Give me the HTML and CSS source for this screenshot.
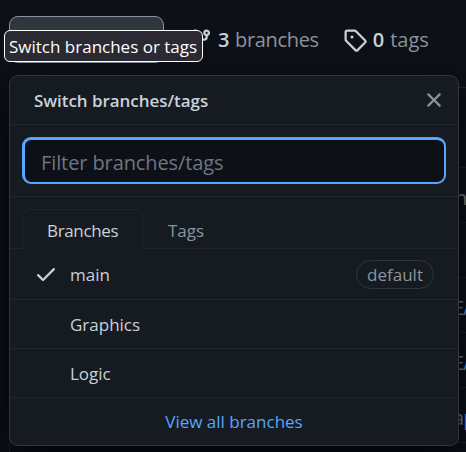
FILE: index.html
```html
<!DOCTYPE html>
<html lang="en">
<head>
<meta charset="utf-8">
<title>Switch branches/tags</title>
<link rel="stylesheet" href="styles.css">
</head>
<body>
<div class="page">
  <div class="toolbar">
    <button class="branch-button" aria-label="Switch branches or tags"></button>
    <a class="stat stat-branches">
      <svg width="24" height="24" viewBox="0 0 16 16"><path fill-rule="evenodd" d="M11.75 2.5a.75.75 0 100 1.5.75.75 0 000-1.5zm-2.25.75a2.25 2.25 0 113 2.122V6A2.5 2.5 0 0110 8.5H6a1 1 0 00-1 1v1.128a2.251 2.251 0 11-1.5 0V5.372a2.25 2.25 0 111.5 0v1.836A2.492 2.492 0 016 7h4a1 1 0 001-1v-.628A2.25 2.25 0 019.5 3.25zM4.25 12a.75.75 0 100 1.5.75.75 0 000-1.5zM3.5 3.25a.75.75 0 111.5 0 .75.75 0 01-1.5 0z"/></svg>
      <strong>3</strong><span>branches</span>
    </a>
    <a class="stat stat-tags">
      <svg width="24" height="24" viewBox="0 0 16 16"><path fill-rule="evenodd" d="M2.5 7.775V2.75a.25.25 0 01.25-.25h5.025a.25.25 0 01.177.073l6.25 6.25a.25.25 0 010 .354l-5.025 5.025a.25.25 0 01-.354 0l-6.25-6.25a.25.25 0 01-.073-.177zm-1.5 0V2.75C1 1.784 1.784 1 2.75 1h5.025c.464 0 .91.184 1.238.513l6.25 6.25a1.75 1.75 0 010 2.474l-5.026 5.026a1.75 1.75 0 01-2.474 0l-6.25-6.25A1.75 1.75 0 011 7.775zM6 5a1 1 0 100 2 1 1 0 000-2z"/></svg>
      <strong>0</strong><span>tags</span>
    </a>
  </div>
  <div class="files">
    <div class="file file-head"></div>
    <div class="file file-first"><span>n</span></div>
    <div class="file"></div>
    <div class="file"><span>E<b>A</b></span></div>
    <div class="file"><span>E<b>A</b></span></div>
    <div class="file"><span>a<b>p</b></span></div>
    <div class="file"></div>
  </div>

  <div class="popover">
    <div class="header">
      <span class="title">Switch branches/tags</span>
      <svg class="close" width="24" height="24" viewBox="0 0 16 16"><path fill-rule="evenodd" d="M3.72 3.72a.75.75 0 011.06 0L8 6.94l3.22-3.22a.75.75 0 111.06 1.06L9.06 8l3.22 3.22a.75.75 0 11-1.06 1.06L8 9.06l-3.22 3.22a.75.75 0 01-1.06-1.06L6.94 8 3.72 4.78a.75.75 0 010-1.06z"/></svg>
    </div>
    <div class="filter"><div class="field"><span>Filter branches/tags</span></div></div>
    <div class="tabs">
      <div class="tab selected"><span>Branches</span></div>
      <div class="tab"><span>Tags</span></div>
    </div>
    <div class="row">
      <svg class="check" width="24" height="24" viewBox="0 0 16 16"><path fill-rule="evenodd" d="M13.78 4.22a.75.75 0 010 1.06l-7.25 7.25a.75.75 0 01-1.06 0L2.22 9.28a.75.75 0 011.06-1.06L6 10.94l6.72-6.72a.75.75 0 011.06 0z"/></svg>
      <span class="name">main</span>
      <span class="badge">default</span>
    </div>
    <div class="row"><span class="name">Graphics</span></div>
    <div class="row"><span class="name">Logic</span></div>
    <div class="footer"><span>View all branches</span></div>
  </div>
  <div class="tooltip"><span>Switch branches or tags</span></div>
</div>
</body>
</html>
```
FILE: styles.css
```css
* { box-sizing: border-box; }
body {
  margin: 0;
  background: #0d1117;
  color: #c9d1d9;
  font-family: "Open Sans", "Noto Sans", sans-serif;
  font-size: 17px;
  line-height: 24px;
}
svg { fill: currentColor; flex: none; display: block; }
.page { position: relative; width: 466px; height: 452px; overflow: hidden; }
.toolbar { display: flex; align-items: center; height: 87px; padding: 0 0 8px 9px; }
.branch-button {
  width: 155px; height: 47px; padding: 0;
  border: 1px solid #8b949e; border-radius: 9px; background: #30363d;
}
.stat { display: flex; align-items: center; font-size: 20px; color: #8b949e; letter-spacing: -0.35px; }
.stat svg { color: #c9d1d9; }
.stat strong { color: #c9d1d9; font-weight: 600; margin: 0 6px 0 5px; }
.stat-branches { margin-left: 25px; }
.stat-tags { margin-left: 24px; letter-spacing: 0; }
.stat-tags strong { margin-left: 6px; }
.files { margin-left: 9px; border: 1px solid #21262d; border-width: 1px 0 0 1px; border-radius: 9px 0 0; }
.file { height: 55px; padding: 6px 0 0 443px; border-bottom: 1px solid #21262d; display: flex; align-items: center; white-space: nowrap; color: #8b949e; font-size: 20px; letter-spacing: -1px; }
.file-head { height: 80px; }
.file-first { padding-left: 445px; }
.file b { color: #58a6ff; font-weight: 400; }

.popover {
  position: absolute; left: 9px; top: 75px; width: 450px; height: 371px;
  background: #161b22; border: 1px solid #30363d; border-radius: 9px;
  box-shadow: 0 12px 36px #010409;
}
.header { height: 49px; border-bottom: 1px solid #21262d; display: flex; align-items: center; justify-content: space-between; padding: 0 12px 0 24px; }
.title { font-weight: 600; letter-spacing: -0.05px; padding-top: 2px; }
.close { color: #8b949e; }
.filter { height: 72px; border-bottom: 1px solid #21262d; padding: 12px; }
.field { height: 47px; border: 2px solid #58a6ff; border-top-width: 3px; border-left-width: 3px; border-radius: 9px; background: #0d1117; color: #6e7681; padding-left: 16px; font-size: 20px; line-height: 45px; letter-spacing: -0.1px; }
.tabs { height: 52px; padding: 12px 12px 0; display: flex; box-shadow: inset 0 -1px #21262d; }
.tab { height: 40px; padding: 0 25px; line-height: 43px; color: #8b949e; }
.selected { width: 121px; padding: 0 24px; border: 1px solid #21262d; border-bottom: 0; border-radius: 9px 9px 0 0; background: #161b22; color: #c9d1d9; line-height: 42px; letter-spacing: -0.35px; }
.row { height: 49px; padding: 0 24px 0 60px; border-bottom: 1px solid #21262d; display: flex; align-items: center; }
.row .name { padding-top: 1px; }
.tabs + .row { height: 51px; padding-left: 24px; }
.check { margin-right: 12px; }
.badge { margin-left: auto; width: 78px; height: 29px; border: 1px solid #30363d; border-radius: 15px; color: #8b949e; text-align: center; line-height: 27px; }
.footer { height: 48px; color: #58a6ff; text-align: center; line-height: 47px; }
.tooltip {
  position: absolute; left: 4px; top: 30px; width: 199px; height: 32px;
  padding-left: 4px; border: 1px solid #fff; border-radius: 6px; background: #2b2a33;
  color: #fff; white-space: nowrap; line-height: 31px;
}
```
